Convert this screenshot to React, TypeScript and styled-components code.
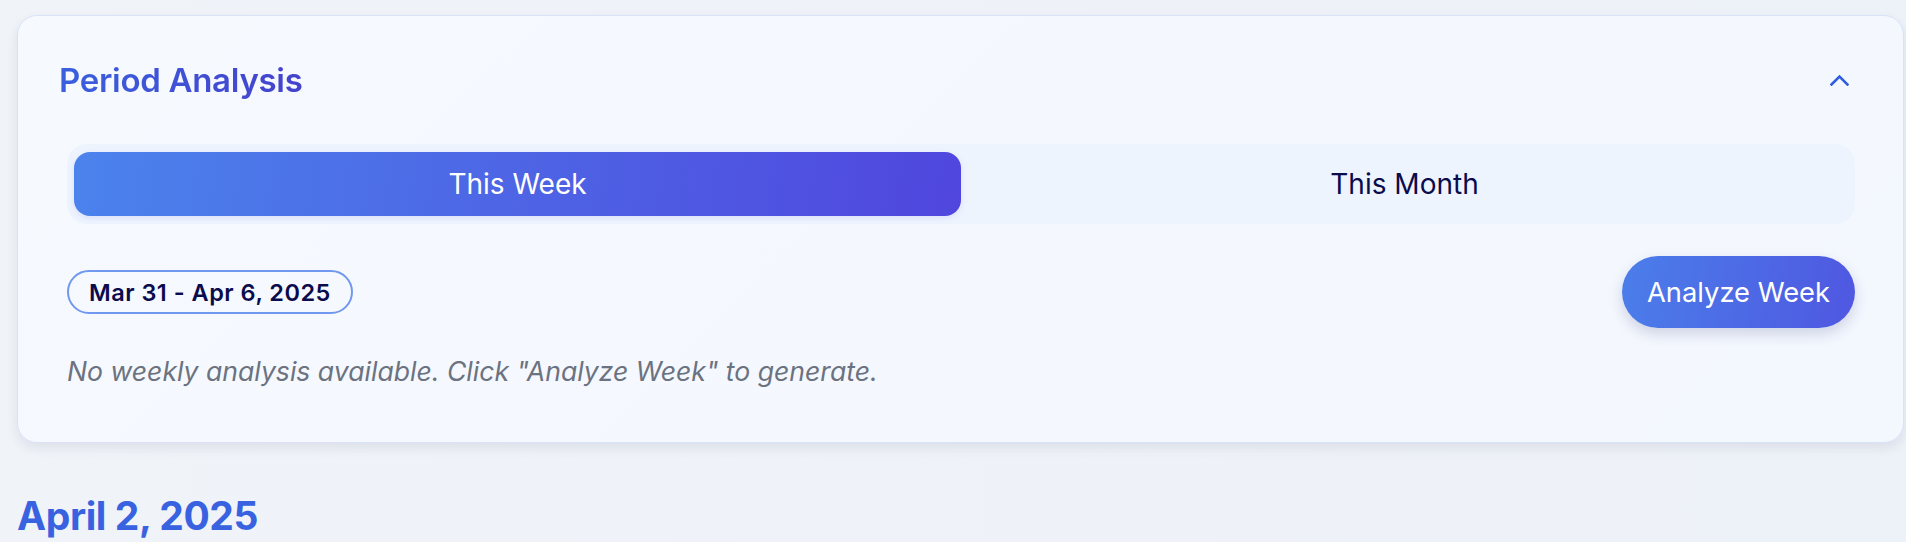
import React, { useState } from "react";
import styled, { createGlobalStyle } from "styled-components";

const GlobalStyle = createGlobalStyle`
  html, body {
    margin: 0;
    padding: 0;
    background: #eef2f8;
    font-family: Inter, "Noto Sans", Arial, sans-serif;
    -webkit-font-smoothing: antialiased;
  }
  * { box-sizing: border-box; }
`;

const Page = styled.div`
  min-height: 542px;
  background: linear-gradient(90deg, #f0f3f8 0%, #edf1f8 100%);
  padding: 15px 2px 0 17px;
  overflow: hidden;
`;

const Card = styled.section`
  background: linear-gradient(135deg, #f6f9fe 0%, #f3f7fe 100%);
  border: 1px solid #d8e3f8;
  border-radius: 20px;
  box-shadow: 0 5px 12px rgba(30, 41, 80, 0.09);
  padding-bottom: 55px;
`;

const Header = styled.header`
  display: flex;
  align-items: center;
  justify-content: space-between;
  padding: 44px 54px 0 41px;
  height: 84px;
`;

const Title = styled.h2`
  margin: 0;
  font-size: 33px;
  line-height: 40px;
  font-weight: 600;
  letter-spacing: -0.3px;
  background: linear-gradient(90deg, #3a60dd 0%, #4542cc 100%);
  -webkit-background-clip: text;
  background-clip: text;
  color: transparent;
`;

const Toggle = styled.button`
  border: none;
  background: transparent;
  padding: 0;
  width: 19px;
  height: 12px;
  display: flex;
  cursor: pointer;
`;

const Body = styled.div`
  padding: 0 48px 0 49px;
`;

const Tabs = styled.div`
  margin-top: 44px;
  display: grid;
  grid-template-columns: 1fr 1fr;
  padding: 8px 7px;
  background: #eef4fe;
  border-radius: 20px;
  height: 80px;
`;

const Tab = styled.button<{ $active?: boolean }>`
  border: none;
  border-radius: 16px;
  font-family: inherit;
  font-size: 28px;
  font-weight: 400;
  cursor: pointer;
  color: ${(p) => (p.$active ? "#ffffff" : "#0b0c4d")};
  background: ${(p) =>
    p.$active ? "linear-gradient(100deg, #4b83ec 0%, #5046de 100%)" : "transparent"};
  box-shadow: ${(p) => (p.$active ? "0 2px 6px rgba(79, 70, 229, 0.12)" : "none")};
`;

const Row = styled.div`
  margin-top: 32px;
  display: flex;
  align-items: center;
  justify-content: space-between;
`;

const DatePill = styled.span`
  display: inline-flex;
  align-items: center;
  height: 44px;
  padding: 0 20px;
  border: 2px solid #7098ef;
  border-radius: 999px;
  font-size: 23.5px;
  font-weight: 600;
  color: #0b0c4d;
  letter-spacing: 0.5px;
`;

const AnalyzeButton = styled.button`
  height: 72px;
  padding: 0 25px;
  border: none;
  border-radius: 999px;
  font-family: inherit;
  font-size: 27.3px;
  font-weight: 400;
  color: #ffffff;
  background: linear-gradient(100deg, #4b7eea 0%, #4f57e1 100%);
  box-shadow: 0 6px 14px rgba(40, 50, 110, 0.18);
  cursor: pointer;
`;

const EmptyNote = styled.p`
  margin: 27px 0 0;
  font-size: 26.6px;
  line-height: 32px;
  font-style: italic;
  color: #6b7280;
`;

const DayHeading = styled.h3`
  margin: 49px 0 0;
  font-size: 39px;
  line-height: 48px;
  font-weight: 700;
  letter-spacing: -0.4px;
  color: #3862e0;
`;

const ChevronUp = () => (
  <svg width="19" height="12" viewBox="0 0 19 12" fill="none">
    <polyline
      points="1.5,10.5 9.5,2.5 17.5,10.5"
      stroke="#2f5ce0"
      strokeWidth="2.6"
      strokeLinecap="square"
      strokeLinejoin="miter"
    />
  </svg>
);

export default function App() {
  const [period, setPeriod] = useState<"week" | "month">("week");
  return (
    <>
      <GlobalStyle />
      <Page>
        <Card>
          <Header>
            <Title>Period Analysis</Title>
            <Toggle aria-label="Collapse">
              <ChevronUp />
            </Toggle>
          </Header>
          <Body>
            <Tabs>
              <Tab $active={period === "week"} onClick={() => setPeriod("week")}>
                This Week
              </Tab>
              <Tab $active={period === "month"} onClick={() => setPeriod("month")}>
                This Month
              </Tab>
            </Tabs>
            <Row>
              <DatePill>Mar 31 - Apr 6, 2025</DatePill>
              <AnalyzeButton>Analyze Week</AnalyzeButton>
            </Row>
            <EmptyNote>
              No weekly analysis available. Click "Analyze Week" to generate.
            </EmptyNote>
          </Body>
        </Card>
        <DayHeading>April 2, 2025</DayHeading>
      </Page>
    </>
  );
}
